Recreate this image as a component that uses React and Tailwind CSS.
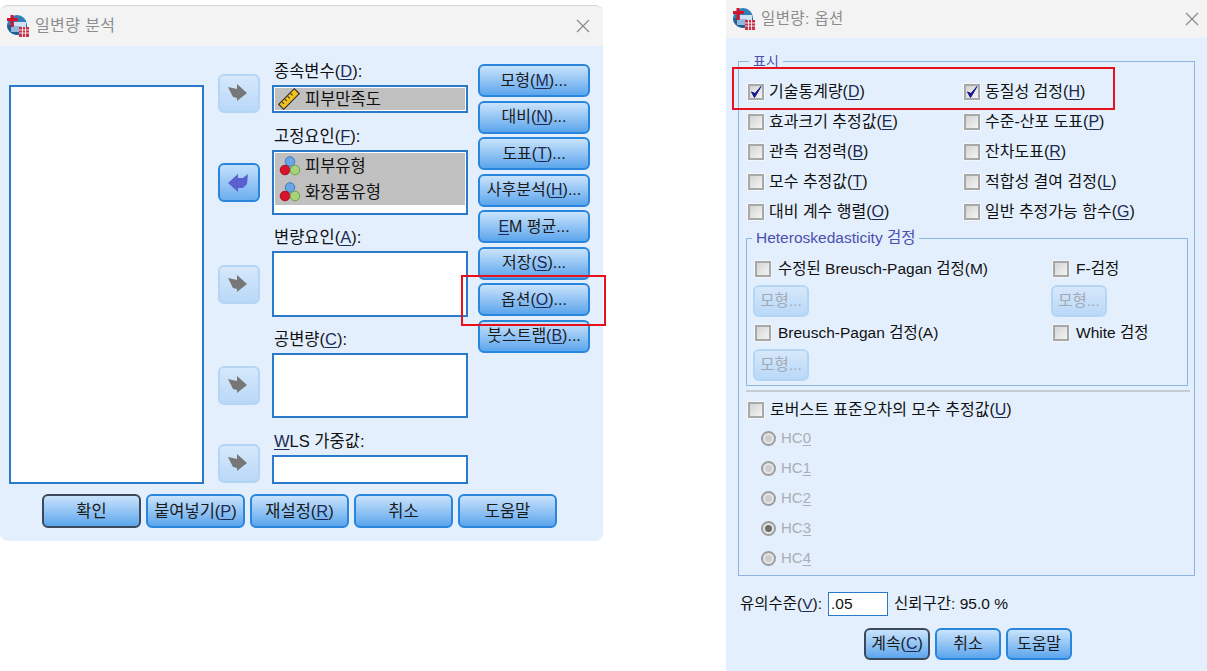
import React from 'react';

const font = 'font-["Liberation_Sans","Noto_Sans_CJK_KR",sans-serif]';

const AppIcon = () => (
  <svg width="24" height="24" viewBox="0 0 24 24" className="shrink-0">
    <circle cx="11" cy="11" r="10" fill="#2f7fb8" />
    <path d="M1 11a10 10 0 0 0 20 0z" fill="#1f5f96" />
    <rect x="8" y="8" width="12" height="8" fill="#cfe2f3" />
    <rect x="5" y="12" width="10" height="6" fill="#8fb8dc" />
    <path d="M6 1v12M1 5.500h11" stroke="#d3142c" strokeWidth="3" fill="none" />
    <rect x="13" y="13" width="10" height="10" fill="#c8324a" />
    <path d="M13 16h10M13 19h10M16.500 13v10M19.500 13v10" stroke="#fff" strokeWidth="0.8" />
  </svg>
);

const Close = () => (
  <svg width="14" height="14" viewBox="0 0 14 14" className="shrink-0">
    <path d="M1 1l12 12M13 1L1 13" stroke="#8a8a8a" strokeWidth="1.200" fill="none" />
  </svg>
);

const Title = ({ text, left, right, h, size }) => (
  <div className={`flex items-center bg-[#f3f3f3] shrink-0 ${h} ${left} ${right}`}>
    <AppIcon />
    <span className={`ml-[5px] text-[#8d8d8d] tracking-[0.4px] ${size}`}>{text}</span>
    <div className="flex-1" />
    <Close />
  </div>
);

// 회색 화살표(비활성) / 파란 화살표(활성)
const ArrowBtn = ({ active, className }) => (
  <div className={`w-[42px] h-[39px] rounded-[6px] border-2 flex items-center justify-center ${active ? 'border-[#2a86dc] bg-gradient-to-b from-[#c4e0fb] to-[#6caeee]' : 'border-[#b5d5f5] bg-gradient-to-b from-[#d6e8fb] to-[#b9d8f8]'} ${className}`}>
    <svg width="22" height="20" viewBox="0 0 22 20" className="-ml-[2px]">
      {active ? (
        <path d="M1 10L11 1v4h5l5-4-1 10-4 4h-5v4z" fill="#5b60d0" />
      ) : (
        <path d="M1 3l9 2V0l10 9-10 8v-3l-4-1z" fill="#777777" />
      )}
    </svg>
  </div>
);

const Btn = ({ children, className, def }) => (
  <div className={`flex items-center justify-center rounded-[6px] border-2 bg-gradient-to-b from-[#c9e3fb] to-[#5aa5ec] text-[#1a1a1a] whitespace-nowrap ${def ? 'border-[#3a4a5c]' : 'border-[#2a86dc]'} ${className}`}>
    {children}
  </div>
);

const GhostBtn = ({ className }) => (
  <div className={`w-[56px] h-[32px] rounded-[6px] border-2 border-[#b5d5f5] bg-gradient-to-b from-[#d6e8fb] to-[#b9d8f8] flex items-center justify-center text-[15.500px] text-[#a3a9b0] ${className}`}>
    모형...
  </div>
);

const U = ({ children }) => <span className="underline underline-offset-2 text-[#1c2a55]">{children}</span>;

const Ruler = () => (
  <svg width="22" height="22" viewBox="0 0 22 22" className="shrink-0">
    <g transform="rotate(-45 11 11)">
      <rect x="0" y="7.500" width="22" height="7" fill="#f2c21a" stroke="#333" strokeWidth="1.200" />
      <path d="M4 8v3M8 8v3M12 8v3M16 8v3" stroke="#333" strokeWidth="1" />
    </g>
  </svg>
);

const Nominal = () => (
  <svg width="22" height="20" viewBox="0 0 22 20" className="shrink-0">
    <circle cx="11" cy="5.500" r="4.800" fill="#6aa5e6" stroke="#3d7cc4" />
    <circle cx="6" cy="14" r="4.800" fill="#d8142c" stroke="#a60f22" />
    <circle cx="16" cy="14" r="4.800" fill="#a5d27a" stroke="#6ea044" />
  </svg>
);

const Label = ({ children, className }) => (
  <div className={`h-[28px] pl-[2px] pt-[1px] flex items-center text-[16.500px] text-[#111] whitespace-nowrap ${className || ''}`}>{children}</div>
);

const Box = ({ children, className }) => (
  <div className={`w-[196px] bg-white border-2 border-[#2b7ac9] ${className}`}>{children}</div>
);

const Check = ({ checked }) => (
  <div className="w-[16px] h-[16px] shrink-0 border-2 border-[#a8a8a8] bg-gradient-to-br from-[#d4d4d4] to-[#f4f4f4] outline outline-1 outline-[#f3f6fa] relative">
    {checked && (
      <svg width="16" height="16" viewBox="0 0 16 16" className="absolute -left-[2px] -top-[2px]">
        <path d="M3.500 8l3 5.500L13 2.500l-6 7z" fill="#14148c" stroke="#14148c" strokeWidth="1" />
      </svg>
    )}
  </div>
);

const CheckRow = ({ checked, children, className, gap = 'ml-[5px]' }) => (
  <div className={`h-[30px] pt-[2px] flex items-center text-[#111] whitespace-nowrap text-[16px] ${className || ''}`}>
    <Check checked={checked} />
    <span className={gap}>{children}</span>
  </div>
);

const HeteroRow = ({ children }) => (
  <CheckRow gap="ml-[7px]" className="pl-[2px] !text-[15.500px]">{children}</CheckRow>
);

const Radio = ({ on, children }) => (
  <div className="h-[30px] flex items-center text-[15px] text-[#a9aeb5]">
    <div className="w-[15px] h-[15px] rounded-full border-2 border-[#9d9d9d] bg-[#e6e6e6] flex items-center justify-center">
      <div className={`w-[7px] h-[7px] rounded-full ${on ? 'bg-[#6d6d6d]' : 'bg-[#cdcdcd]'}`} />
    </div>
    <span className="ml-[5px]">{children}</span>
  </div>
);

const UniDialog = () => (
  <div className="relative w-[603px] h-[536px] mt-[5px] shrink-0 rounded-[8px] overflow-hidden border-t border-[#d4d4d4] bg-[#e3effc] flex flex-col">
    <Title text="일변량 분석" left="pl-[6px]" right="pr-[13px]" h="h-[40px]" size="text-[16px]" />
    <div className="flex items-start h-[448px]">
      <div className="w-[195px] h-[399px] ml-[9px] mt-[39px] bg-white border-2 border-[#2b7ac9]" />
      <div className="ml-[14px] flex flex-col">
        <ArrowBtn className="mt-[28px]" />
        <ArrowBtn active className="mt-[50px]" />
        <ArrowBtn className="mt-[63px]" />
        <ArrowBtn className="mt-[62px]" />
        <ArrowBtn className="mt-[39px]" />
      </div>
      <div className="ml-[12px] mt-[11px] flex flex-col">
        <Label>종속변수(<U>D</U>):</Label>
        <Box className="h-[28px] p-[1px]">
          <div className="h-full bg-[#c0c0c0] flex items-center pl-[3px] text-[16.500px] text-[#111]">
            <Ruler />
            <span className="ml-[5px]">피부만족도</span>
          </div>
        </Box>
        <Label className="mt-[9px]">고정요인(<U>F</U>):</Label>
        <Box className="h-[65px] p-[1px]">
          <div className="h-[52px] bg-[#c0c0c0] text-[16.500px] text-[#111]">
            <div className="h-[26px] flex items-center pl-[4px]"><Nominal /><span className="ml-[4px]">피부유형</span></div>
            <div className="h-[26px] flex items-center pl-[4px]"><Nominal /><span className="ml-[4px]">화장품유형</span></div>
          </div>
        </Box>
        <Label className="mt-[8px]">변량요인(<U>A</U>):</Label>
        <Box className="h-[66px]" />
        <Label className="mt-[8px]">공변량(<U>C</U>):</Label>
        <Box className="h-[65px]" />
        <Label className="mt-[9px]"><span><U>W</U>LS 가중값:</span></Label>
        <Box className="h-[29px]" />
      </div>
      <div className="ml-[10px] mt-[18px] w-[112px] flex flex-col gap-[3.500px] text-[16px]">
        <Btn className="h-[33px]">모형(<U>M</U>)...</Btn>
        <Btn className="h-[33px]">대비(<U>N</U>)...</Btn>
        <Btn className="h-[33px]">도표(<U>T</U>)...</Btn>
        <Btn className="h-[33px]">사후분석(<U>H</U>)...</Btn>
        <Btn className="h-[33px]"><U>E</U>M 평균...</Btn>
        <Btn className="h-[33px]">저장(<U>S</U>)...</Btn>
        <Btn className="h-[33px]">옵션(<U>O</U>)...</Btn>
        <Btn className="h-[33px]">붓스트랩(<U>B</U>)...</Btn>
      </div>
    </div>
    <div className="flex ml-[42px] gap-[5px] text-[16.500px]">
      <Btn def className="w-[99px] h-[34px]">확인</Btn>
      <Btn className="w-[99px] h-[34px]">붙여넣기(<U>P</U>)</Btn>
      <Btn className="w-[99px] h-[34px]">재설정(<U>R</U>)</Btn>
      <Btn className="w-[99px] h-[34px]">취소</Btn>
      <Btn className="w-[99px] h-[34px]">도움말</Btn>
    </div>
  </div>
);

const OptionsDialog = () => (
  <div className="w-[481px] h-[671px] ml-[123px] shrink-0 bg-[#e3effc] flex flex-col">
    <Title text="일변량: 옵션" left="pl-[6px]" right="pr-[8px]" h="h-[38px]" size="text-[15.500px]" />
    <div className="relative ml-[12px] mt-[23px] w-[457px] h-[515px] border border-[#8db6e0] pl-[9px] pt-[14px]">
      <span className="absolute left-[10px] -top-[10px] px-[4px] bg-[#e3effc] text-[14px] leading-[18px] text-[#4a4fb0]">표시</span>
      <div className="grid grid-cols-[216px_1fr]">
        <CheckRow checked>기술통계량(<U>D</U>)</CheckRow>
        <CheckRow checked>동질성 검정(<U>H</U>)</CheckRow>
        <CheckRow>효과크기 추정값(<U>E</U>)</CheckRow>
        <CheckRow>수준-산포 도표(<U>P</U>)</CheckRow>
        <CheckRow>관측 검정력(<U>B</U>)</CheckRow>
        <CheckRow>잔차도표(<U>R</U>)</CheckRow>
        <CheckRow>모수 추정값(<U>T</U>)</CheckRow>
        <CheckRow>적합성 결여 검정(<U>L</U>)</CheckRow>
        <CheckRow>대비 계수 행렬(<U>O</U>)</CheckRow>
        <CheckRow>일반 추정가능 함수(<U>G</U>)</CheckRow>
      </div>
      <div className="relative -ml-[2px] mt-[12px] w-[442px] h-[148px] border border-[#8db6e0] pl-[6px] pt-[14px]">
        <span className="absolute left-[5px] -top-[10px] px-[4px] bg-[#e3effc] text-[15.500px] leading-[18px] text-[#4a4fb0]">Heteroskedasticity 검정</span>
        <div className="grid grid-cols-[298px_1fr]">
          <div>
            <HeteroRow>수정된 Breusch-Pagan 검정(M)</HeteroRow>
            <GhostBtn className="mt-[2px]" />
          </div>
          <div>
            <HeteroRow>F-검정</HeteroRow>
            <GhostBtn className="mt-[2px]" />
          </div>
          <div>
            <HeteroRow>Breusch-Pagan 검정(A)</HeteroRow>
            <GhostBtn className="mt-[2px]" />
          </div>
          <div>
            <HeteroRow>White 검정</HeteroRow>
          </div>
        </div>
      </div>
      <div className="-ml-[2px] mt-[4px] w-[444px] h-[2px] bg-[#c4ccd4]" />
      <CheckRow className="mt-[2px]" gap="ml-[6px]">로버스트 표준오차의 모수 추정값(<U>U</U>)</CheckRow>
      <div className="ml-[13px] mt-[-1px]">
        <Radio>HC<span className="underline underline-offset-2">0</span></Radio>
        <Radio>HC<span className="underline underline-offset-2">1</span></Radio>
        <Radio>HC<span className="underline underline-offset-2">2</span></Radio>
        <Radio on>HC<span className="underline underline-offset-2">3</span></Radio>
        <Radio>HC<span className="underline underline-offset-2">4</span></Radio>
      </div>
    </div>
    <div className="flex items-center ml-[14px] mt-[16px] h-[24px] text-[15.500px] text-[#111] whitespace-nowrap">
      <span className="w-[88px]">유의수준(<U>V</U>):</span>
      <div className="w-[60px] h-[24px] bg-white border border-[#2b7ac9] pl-[2px] leading-[22px]">.05</div>
      <span className="ml-[6px]">신뢰구간: 95.0 %</span>
    </div>
    <div className="flex ml-[138px] mt-[12px] gap-[5px] text-[16px]">
      <Btn def className="w-[66px] h-[32px]">계속(<U>C</U>)</Btn>
      <Btn className="w-[66px] h-[32px]">취소</Btn>
      <Btn className="w-[66px] h-[32px]">도움말</Btn>
    </div>
  </div>
);

export default function App() {
  return (
    <div className={`relative w-[1207px] h-[671px] overflow-hidden bg-white flex items-start ${font}`}>
      <UniDialog />
      <OptionsDialog />
      {/* 빨간 강조 상자 */}
      <div className="absolute left-[461px] top-[275px] w-[145px] h-[51px] border-2 border-[#e8101c]" />
      <div className="absolute left-[732px] top-[67px] w-[383px] h-[43px] border-2 border-[#e8101c]" />
    </div>
  );
}
